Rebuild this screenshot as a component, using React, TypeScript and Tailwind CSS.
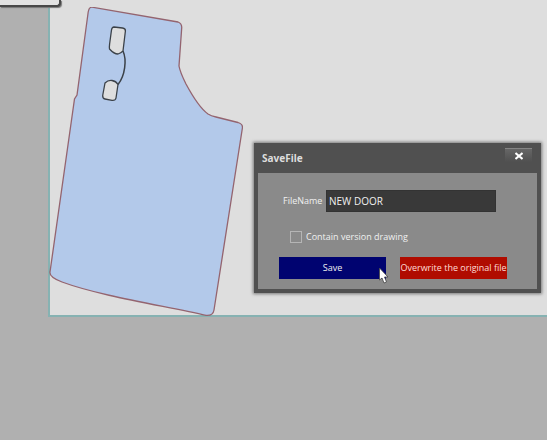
import { useState } from "react";

function DoorDrawing() {
  return (
    <svg className="block h-[310px] w-[194px]" viewBox="49 7 194 310" role="img" aria-label="Door panel">
      <path
        d="M92 7.2 L178 22 Q182 23.5 181.700 28 L179 66 Q180 72 186 84 C193 97 201 109 208 114 Q211 116 216 117 L238 122.500 Q243 124 242.400 128 L214 310 Q213 316 206 315.400 C165 306 100 296 62 282 Q49 277 50 272 L74.500 99 L77 95 L88.200 12 Q89 7 92 7.200Z"
        fill="#b3c9ea"
        stroke="#94646f"
        strokeWidth="1.3"
      />
      <g stroke="#3b4148" strokeWidth="1.3" fill="#dedede">
        <path d="M114 27 L122.500 28 Q125.700 28.500 125.400 31 L123 51 Q121 53 118 54 Q114 54 109.500 49 Q109.200 47 109.600 44 L111.500 30 Q112 27 114 27Z" />
        <path d="M105 83 Q108 80 112 80.500 Q116 81 118 84.500 L116 98 Q115.500 100.700 112 100.400 L105 99 Q102.500 98.500 102.700 95.500Z" />
        <path d="M123 51 C127 60 125 76 118 84.500" fill="none" strokeWidth="1.500" />
      </g>
    </svg>
  );
}

function SaveDialog() {
  const [name, setName] = useState("NEW DOOR");
  return (
    <section
      role="dialog"
      aria-labelledby="save-title"
      className="absolute left-[254px] top-[143px] flex h-[150px] w-[287px] flex-col border-4 border-t-0 border-[#505050] bg-[#8a8a8a] text-[#f0f0f0] shadow-[0_0_3px_1px_#777]"
    >
      <header className="flex h-[30px] shrink-0 items-start justify-between bg-[#505050] pl-1 pr-[5px] pt-[5px]">
        <h1 id="save-title" className="pt-0.5 font-['Noto_Sans',sans-serif] text-[10px] leading-4 font-bold text-[#dddddd]">SaveFile</h1>
        <button type="button" aria-label="Close" className="flex h-[14px] w-[27px] items-center justify-center border-t border-[#858585] bg-linear-to-b from-[#666] to-[#505050]">
          <svg className="size-2" viewBox="0 0 8 8" fill="none" stroke="#fff" strokeWidth="2">
            <path d="M0.500 1 L7.500 7 M7.500 1 L0.500 7" />
          </svg>
        </button>
      </header>
      <form className="flex flex-col pl-[21px] pr-[30px] pt-[17px]" onSubmit={(e) => e.preventDefault()}>
        <div className="flex items-center gap-1 pl-1 pr-[11px]">
          <label htmlFor="file-name" className="w-[39px] text-[9px] leading-4 whitespace-nowrap">FileName</label>
          <input
            id="file-name"
            value={name}
            onChange={(e) => setName(e.target.value)}
            className="h-[22px] min-w-0 flex-1 border border-[#333] bg-[#393939] px-0.5 text-[10px] outline-none"
          />
        </div>
        <label className="mt-[17px] flex items-center gap-1 pl-[11px] text-[9px] leading-4">
          <input type="checkbox" className="size-3 appearance-none border border-[#b5b5b5] checked:bg-[#393939]" />
          Contain version drawing
        </label>
        <div className="mt-3 grid grid-cols-2 gap-[14px]">
          <button type="button" className="h-[22px] bg-[#000370] text-[9px] whitespace-nowrap">Save</button>
          <button type="button" className="h-[22px] bg-[#b00c00] text-[9px] whitespace-nowrap text-[#ffdcd7]">Overwrite the original file</button>
        </div>
      </form>
    </section>
  );
}

export default function App() {
  return (
    <main className="relative min-h-screen overflow-hidden bg-[#b0b0b0] pl-12 font-['Open_Sans',sans-serif]">
      <div className="border-b-2 border-l-2 border-[#86b2b2] bg-[#dedede] pt-[7px]">
        <div className="-mb-0.5 -ml-px">
          <DoorDrawing />
        </div>
      </div>
      <div className="absolute left-0 top-0 h-[7px] w-[61px] rounded-br border-b-2 border-r-2 border-[#484848] bg-[#e2e2e2] shadow-[1px_1px_1px_#777]" />
      <SaveDialog />
      <svg className="absolute left-[379px] top-[267px] h-[17px] w-[10px]" viewBox="0 0 10 17" fill="#fff" stroke="#444" strokeWidth="0.800">
        <path d="M0.500 1 V13 L3 11 L5 16 L7.500 15 L5.500 10 H9Z" />
      </svg>
    </main>
  );
}
